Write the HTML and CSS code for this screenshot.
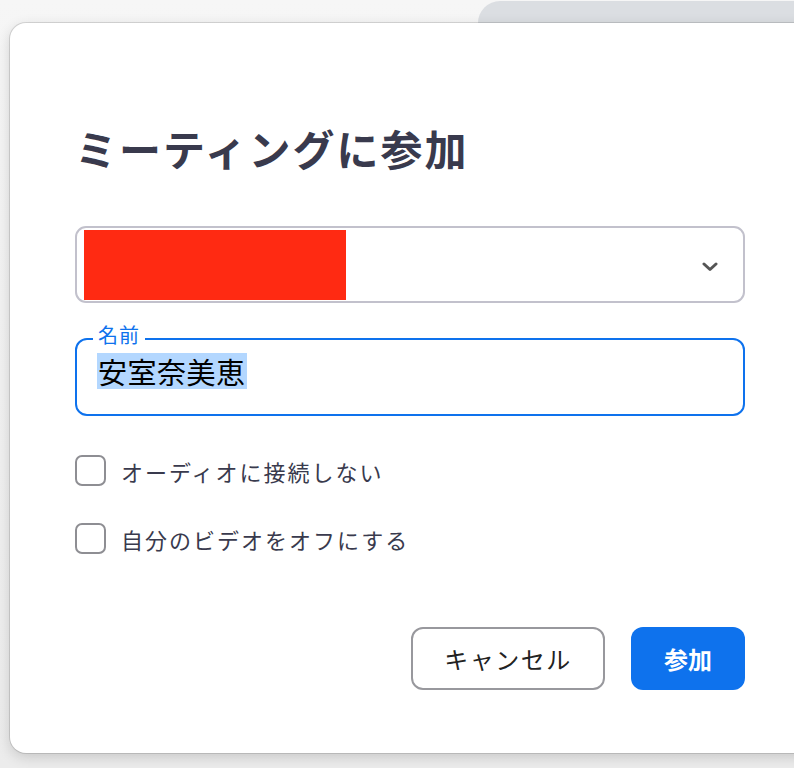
FILE: index.html
```html
<!DOCTYPE html>
<html lang="ja">
<head>
<meta charset="utf-8">
<link rel="stylesheet" href="styles.css">
</head>
<body>
<div class="tab"></div>
<div class="dialog">
  <h1 class="title">ミーティングに参加</h1>
  <div class="select">
    <div class="redact"></div>
    <svg class="chev" width="16" height="10" viewBox="0 0 16 10"><path d="M2 2 L8 7.5 L14 2" fill="none" stroke="#555" stroke-width="3" stroke-linecap="round" stroke-linejoin="round"/></svg>
  </div>
  <fieldset class="field">
    <legend class="legend">名前</legend>
    <span class="value">安室奈美恵</span>
  </fieldset>
  <label class="check"><span class="box"></span><span>オーディオに接続しない</span></label>
  <label class="check"><span class="box"></span><span>自分のビデオをオフにする</span></label>
  <div class="actions">
    <button class="btn cancel">キャンセル</button>
    <button class="btn primary">参加</button>
  </div>
</div>
</body>
</html>
```
FILE: styles.css
```css
html, body {
  margin: 0;
  padding: 0;
  height: 768px;
  overflow: hidden;
}
body {
  background: linear-gradient(#f6f6f6, #ececec);
  font-family: "Noto Sans CJK JP", "Noto Sans", sans-serif;
  position: relative;
  padding-top: 23px;
  padding-left: 10px;
  box-sizing: border-box;
}
.tab {
  position: absolute;
  left: 478px;
  top: 1px;
  width: 340px;
  height: 40px;
  background: #dbdee2;
  border-radius: 22px 0 0 0;
}
.dialog {
  position: relative;
  width: 820px;
  height: 730px;
  background: #fff;
  border-radius: 16px;
  box-shadow: 0 0 0 1px rgba(0,0,0,0.12), 0 4px 14px rgba(0,0,0,0.16);
  padding: 0 0 0 65px;
  box-sizing: border-box;
}
.title {
  margin: 0;
  padding-top: 95px;
  font-size: 42px;
  line-height: 60px;
  font-weight: 700;
  color: #393a4d;
  letter-spacing: 2px;
}
.select {
  margin-top: 48px;
  width: 670px;
  height: 77px;
  box-sizing: border-box;
  border: 2px solid #c2c1cc;
  border-radius: 11px;
  display: flex;
  align-items: center;
  justify-content: space-between;
  padding: 0 25px 0 7px;
}
.redact {
  width: 262px;
  height: 70px;
  background: #ff2a12;
}
.chev { display: block; margin-top: 4px; }
.field {
  margin: 22px 0 0 0;
  width: 670px;
  height: 91px;
  box-sizing: border-box;
  border: 2px solid #0e72ed;
  border-radius: 12px;
  padding: 0 0 0 16px;
  min-width: 0;
}
.legend {
  font-size: 20px;
  line-height: 20px;
  color: #0e72ed;
  padding: 0 5px 8px;
  letter-spacing: 1px;
}
.value {
  display: inline-block;
  margin-top: 0;
  margin-left: 4px;
  font-size: 29px;
  line-height: 36px;
  color: #000;
  background: #b3d7ff;
  padding: 0 1px;
  letter-spacing: 0.5px;
}
.check {
  display: flex;
  align-items: center;
  gap: 15px;
  height: 31px;
  margin-top: 39px;
  font-size: 22px;
  letter-spacing: 2px;
  color: #393a4d;
}
.check + .check { margin-top: 37px; }
.box {
  width: 31px;
  height: 31px;
  box-sizing: border-box;
  border: 2px solid #8e8e93;
  border-radius: 7px;
  flex: none;
}
.actions {
  display: flex;
  gap: 26px;
  justify-content: flex-end;
  width: 670px;
  margin-top: 73px;
}
.btn {
  font-family: inherit;
  height: 63px;
  border-radius: 12px;
  font-size: 24px;
  box-sizing: border-box;
  cursor: pointer;
}
.cancel {
  width: 194px;
  background: #fff;
  border: 2px solid #98989d;
  color: #222;
  letter-spacing: 1.5px;
}
.primary {
  width: 114px;
  background: #0e72ed;
  border: none;
  color: #fff;
  font-weight: 700;
}
```
